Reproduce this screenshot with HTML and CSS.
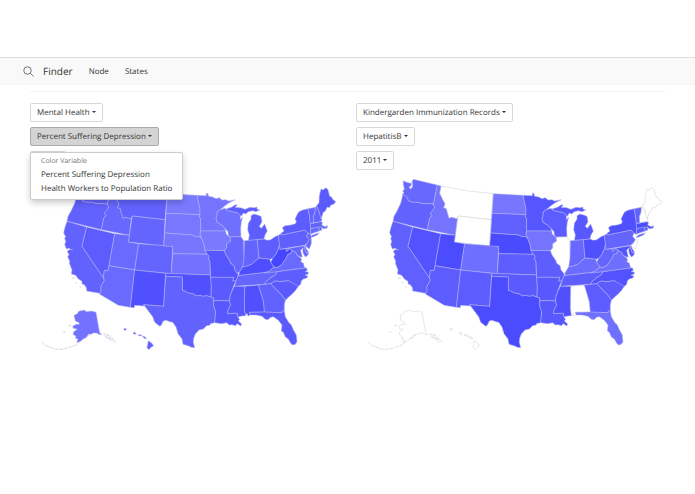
FILE: index.html
```html
<!DOCTYPE html>
<html lang="en">
<head>
    <meta charset="UTF-8">
    <meta name="viewport" content="width=device-width, initial-scale=1.0">
    <title>Finder</title>
    <link rel="stylesheet" href="styles.css">
</head>
<body>
    <nav class="navbar">
        <svg class="search-icon" viewBox="0 0 22 22" aria-hidden="true">
            <circle cx="9" cy="9" r="7.5"/>
            <path d="M14.5 14.5L21 21"/>
        </svg>
        <a href="#" class="brand">Finder</a>
        <a href="#">Node</a>
        <a href="#">States</a>
    </nav>

    <main class="container">
        <div class="panel">
            <button type="button" class="btn">Mental Health <span class="caret"></span></button>
            <div class="dropdown">
                <button type="button" class="btn active" aria-expanded="true">Percent Suffering Depression <span class="caret"></span></button>
                <ul class="dropdown-menu">
                    <li class="dropdown-header">Color Variable</li>
                    <li><a href="#">Percent Suffering Depression</a></li>
                    <li><a href="#">Health Workers to Population Ratio</a></li>
                </ul>
            </div>
            <button type="button" class="btn" aria-label="Year"><span class="caret"></span></button>
            <svg class="map" id="map-depression" viewBox="0 0 927 540"></svg>
        </div>

        <div class="panel">
            <button type="button" class="btn">Kindergarden Immunization Records <span class="caret"></span></button>
            <button type="button" class="btn">HepatitisB <span class="caret"></span></button>
            <button type="button" class="btn">2011 <span class="caret"></span></button>
            <svg class="map" id="map-immunization" viewBox="0 0 927 540"></svg>
        </div>
    </main>

    <script src="maps.js"></script>
</body>
</html>
```
FILE: styles.css
```css
* {
    box-sizing: border-box;
}

body {
    margin: 0;
    padding-top: 57px;
    font-family: "Open Sans", sans-serif;
    font-size: 8px;
    line-height: 11px;
    text-rendering: geometricPrecision;
    color: #333;
    background-color: #fff;
}

a {
    color: inherit;
    text-decoration: none;
}

/* Navigation */
.navbar {
    display: flex;
    align-items: center;
    gap: 16px;
    height: 28px;
    padding: 0 23px;
    background-color: #f9f9f9;
    border-top: 1px solid #ddd;
    border-bottom: 1px solid #f4f4f4;
}

.search-icon {
    width: 11px;
    height: 11px;
    margin-right: -7px;
    fill: none;
    stroke: #555;
    stroke-width: 1.6;
}

.brand {
    font-size: 10px;
}

/* Content */
.container {
    display: grid;
    grid-template-columns: 1fr 1fr;
    gap: 17px;
    margin: 6px 30px 0;
    padding-top: 11px;
    border-top: 1px solid #f3f3f3;
}

.panel {
    display: flex;
    flex-direction: column;
    align-items: flex-start;
    gap: 5px;
}

.btn {
    min-width: 36px;
    height: 19px;
    padding: 0 6px 1px;
    font: inherit;
    text-rendering: inherit;
    color: #333;
    background-color: #fff;
    border: 1px solid #d8d8d8;
    border-radius: 2px;
    white-space: nowrap;
    cursor: pointer;
}

.btn.active {
    background-color: #d4d4d4;
    border-color: #aaa;
}

.caret {
    display: inline-block;
    vertical-align: middle;
    border-top: 2px solid #333;
    border-left: 2px solid transparent;
    border-right: 2px solid transparent;
}

.dropdown {
    position: relative;
    display: flex;
}

.dropdown-menu {
    position: absolute;
    top: 100%;
    left: 0;
    margin: 6px 0 0;
    padding: 2px 0 3px;
    list-style: none;
    white-space: nowrap;
    background-color: #fff;
    border: 1px solid #ccc;
    border-radius: 2px;
    box-shadow: 0 3px 6px rgba(0, 0, 0, 0.2);
}

.dropdown-menu a {
    display: block;
    padding: 1px 10px 2px;
}

.dropdown-header {
    padding: 1px 10px;
    font-size: 7px;
    color: #777;
}

/* Maps */
.map {
    display: block;
    width: 100%;
}

.map path {
    stroke: #b4b4ee;
    stroke-width: 1.5;
    stroke-linejoin: round;
}

.map .no-data {
    fill: #fff;
    stroke: #ccc;
}

.map .islands {
    fill: none;
    stroke: #b4b4d0;
    stroke-width: 2;
    stroke-dasharray: 7 3 3 2;
}

.map .no-data.islands {
    stroke: #c4c4c4;
}
```
FILE: maps.js
```js
// Outline of every state
const states = {
    WA: 'M142,17L152,22 160,24 167,25 165,32 159,37 163,42 169,37 170,27 168,20 172,13 244,30 232,87 220,86 200,86 185,82 170,82 158,78 152,66 140,58 144,52 140,49 145,42 142,30Z',
    OR: 'M140,58L152,66 158,78 170,82 185,82 200,86 220,86 232,88 236,97 230,108 223,115 228,122 221,130 214,164 111,139 114,124 123,108 134,85 138,70Z',
    ID: 'M244,30L255,33 251,55 262,78 267,86 263,98 271,101 274,113 279,130 286,127 304,131 298,181 214,164 221,130 228,122 223,115 236,97 232,88Z',
    MT: 'M255,33L330,47 412,56 405,134 307,123 304,131 286,127 279,130 274,113 271,101 263,98 267,86 262,78 251,55Z',
    WY: 'M307,123L405,134 401,213 295,201Z',
    CA: 'M111,139L170,156 156,214 220,308 223,316 216,328 212,338 214,346 209,355 170,348 169,338 163,329 156,327 156,319 145,312 137,301 124,297 126,285 118,265 119,258 113,246 117,238 112,231 114,226 123,223 128,225 116,220 109,222 104,208 107,200 104,190 107,185 101,174 104,160Z',
    NV: 'M170,156L254,176 237,272 234,287 223,286 220,308 156,214Z',
    UT: 'M254,176L298,181 295,201 326,206 314,285 237,272Z',
    CO: 'M326,206L428,214 424,296 314,285Z',
    AZ: 'M237,272L314,285 301,397 265,391 208,357 214,346 212,338 216,328 223,316 220,308 223,286 234,287Z',
    NM: 'M314,285L407,295 401,394 341,389 343,393 314,391 313,398 301,397Z',
    ND: 'M412,56L502,61 505,80 510,100 510,119 408,115Z',
    SD: 'M408,115L510,119 508,125 512,131 512,168 510,178 515,190 508,185 498,185 487,180 404,174Z',
    NE: 'M404,174L487,180 498,185 508,185 515,190 522,208 525,226 532,238 428,236 428,214 401,213Z',
    KS: 'M428,236L532,238 538,244 535,250 540,260 541,300 424,296Z',
    OK: 'M407,295L541,300 542,307 544,334 543,366 530,362 520,364 508,361 500,363 488,356 475,354 466,349 457,346 457,306 407,304Z',
    TX: 'M407,304L457,306 457,346 466,349 475,354 488,356 500,363 508,361 520,364 530,362 543,366 551,368 551,393 557,410 554,443 541,446 541,450 530,452 520,462 507,465 496,477 491,490 490,502 494,518 484,517 474,512 459,508 456,492 444,476 438,456 428,442 420,440 408,436 400,438 393,452 388,453 374,442 368,425 355,408 341,389 401,394Z',
    MN: 'M502,61L529,62 529,54 534,56 536,64 548,66 558,71 568,68 576,75 588,74 596,78 616,74 600,82 585,92 571,104 562,110 561,124 558,130 561,142 575,150 585,160 587,168 512,168 512,131 508,125 510,119 510,100 505,80Z',
    IA: 'M512,168L587,168 589,178 600,186 602,198 590,206 590,218 583,227 525,226 522,208 515,190 510,178Z',
    MO: 'M525,226L583,227 588,240 599,256 602,265 612,272 615,285 625,297 622,308 618,318 608,318 611,307 542,307 540,260 535,250 538,244 532,238Z',
    AR: 'M542,307L611,307 608,318 618,318 612,330 605,350 600,365 598,377 551,377 551,368 543,366 544,334Z',
    LA: 'M551,377L598,377 602,390 594,405 593,416 622,414 624,426 629,434 625,438 635,447 632,453 622,446 616,452 606,449 598,450 590,443 575,446 554,443 557,410 551,393Z',
    WI: 'M571,104L584,100 594,107 622,113 631,120 631,134 638,127 634,142 632,160 633,185 600,186 595,180 594,170 585,160 575,150 561,142 558,130 561,124 562,110Z',
    MI: 'M588,102L606,96 616,89 622,91 615,97 632,98 645,103 660,97 672,98 681,96 681,102 689,105 678,110 668,107 655,110 647,117 640,114 634,124 622,113 594,107ZM655,197L658,180 653,164 655,145 663,132 663,122 672,117 683,120 693,124 696,140 688,154 694,160 704,147 712,168 705,180 702,192 682,194Z',
    IL: 'M600,186L633,185 641,197 642,250 640,270 636,280 628,292 620,294 615,285 612,272 602,265 599,256 588,240 583,227 590,218 590,206 602,198Z',
    IN: 'M643,197L682,194 687,249 676,258 665,268 652,273 638,276 642,250Z',
    OH: 'M682,194L702,192 712,196 722,194 735,185 745,181 749,207 745,222 738,238 728,250 720,253 705,251 687,249Z',
    KY: 'M626,302L628,292 638,276 652,273 665,268 676,258 687,249 705,251 720,253 722,262 732,276 716,290 700,293Z',
    TN: 'M624,302L700,293 716,291 742,290 736,300 722,308 708,320 704,328 613,334 618,318Z',
    WV: 'M749,207L750,223 768,221 770,229 780,220 786,226 782,236 774,238 768,250 760,262 752,272 740,278 732,276 722,262 728,250 738,238 745,222Z',
    VA: 'M704,294L716,290 732,276 740,278 752,272 760,262 768,250 774,238 782,236 786,226 798,233 800,240 812,248 815,256 812,260 820,264 824,279 742,290Z',
    PA: 'M745,181L753,176 754,180 825,165 834,174 830,184 838,194 832,204 824,211 750,223Z',
    NY: 'M754,180L753,175 762,168 757,158 765,152 782,150 796,146 799,139 795,132 805,112 815,106 834,101 838,120 842,150 842,175 840,178 834,174 825,165ZM840,187L848,180 868,173 862,180 846,187Z',
    VT: 'M834,101L856,97 855,112 850,125 851,143 841,146 838,120Z',
    NH: 'M856,97L860,92 868,112 876,135 873,140 851,143 850,125 855,112Z',
    ME: 'M860,92L867,83 868,62 873,42 879,45 888,38 894,44 899,64 905,66 908,73 917,80 911,88 903,90 898,98 892,96 886,108 880,112 876,124 873,132 868,112Z',
    MA: 'M841,146L873,140 878,143 875,149 882,154 890,156 888,150 893,154 891,160 880,161 874,156 842,161Z',
    CT: 'M842,161L866,156 868,168 850,174 842,178Z',
    RI: 'M866,156L874,156 876,165 868,168Z',
    NJ: 'M834,174L843,179 844,198 844,206 838,222 826,213 832,204 838,194 830,184Z',
    MD: 'M768,221L822,212 828,232 836,234 832,242 826,246 820,236 818,226 820,218 812,226 817,246 812,246 800,240 798,233 786,226 780,220 770,229Z',
    DE: 'M822,212L826,213 828,220 836,232 828,232Z',
    NC: 'M742,290L824,279 829,278 832,286 826,290 835,291 834,298 825,300 834,304 829,310 820,312 814,318 812,328 805,334 795,333 775,317 752,320 735,318 722,326 704,328 708,320 722,308 736,300Z',
    SC: 'M722,326L735,318 752,320 775,317 805,334 797,346 786,358 776,366 766,376 755,360 740,345Z',
    GA: 'M685,330L722,326 740,345 755,360 766,376 763,390 763,408 757,408 756,413 703,412 700,380Z',
    AL: 'M644,334L685,330 700,380 703,411 658,412 661,420 654,423 651,415 646,422 643,400Z',
    MS: 'M613,334L644,334 643,400 646,422 635,423 624,426 622,414 593,416 594,405 602,390 598,377 600,365 605,350Z',
    FL: 'M658,412L703,411 756,413 757,408 763,408 766,425 776,442 784,450 790,464 799,480 801,500 796,508 788,510 782,505 775,492 766,486 760,472 754,468 756,450 745,436 730,425 722,427 714,434 706,433 696,424 678,420 661,420Z',
    AK: 'M132,421L142,416 146,409 162,405 170,410 184,408 198,412 209,473 215,478 209,479 200,474 190,474 184,478 176,477 169,487 160,492 150,500 140,502 144,492 136,490 138,484 129,478 131,470 142,463 130,460 128,454 138,448 148,448 147,443 136,438Z',
    HI: 'M281,461L288,460 289,465 283,466ZM309,473L314,471 319,478 311,477ZM325,479L336,480 334,483 326,482ZM337,483L346,486 350,491 342,490ZM355,497L364,503 371,512 363,517 357,524 351,518 353,508Z'
};

// Thin island chains around Alaska and California
const islands = {
    AK: 'M150,499L138,510 118,517 100,522 78,523 60,516 48,512 36,500M167,491L173,483 180,480M100,470L106,472M116,451L123,452M220,478L232,477 244,487 258,500M224,482L236,490 248,502M230,479L246,494 254,502M228,486L242,494',
    CA: 'M127,310L134,309M137,323L141,325M149,334L152,338'
};

// Red/green level of the fill, lower is a stronger blue
const depression = {
    WA: 100, OR: 98, CA: 98, NV: 92, ID: 104, MT: 98, WY: 100, UT: 106, CO: 100, AZ: 106,
    NM: 80, ND: 122, SD: 120, NE: 118, KS: 114, OK: 80, TX: 98, MN: 116, IA: 122, MO: 86,
    AR: 90, LA: 88, WI: 112, MI: 94, IL: 104, IN: 100, OH: 94, KY: 78, TN: 102, WV: 70,
    PA: 96, NY: 92, VT: 98, NH: 100, ME: 90, MA: 98, CT: 104, RI: 98, NJ: 102, MD: 102,
    DE: 98, VA: 106, NC: 94, SC: 90, GA: 98, AL: 80, MS: 88, FL: 90, AK: 114, HI: 98
};

const immunization = {
    WA: 104, OR: 98, CA: 96, NV: 82, ID: 116, UT: 76, CO: 110, AZ: 92, NM: 92, ND: 118,
    SD: 96, NE: 74, KS: 94, OK: 90, TX: 76, MN: 86, IA: 116, MO: 94, AR: 88, LA: 88,
    WI: 92, MI: 88, IN: 104, OH: 80, KY: 108, TN: 94, WV: 100, PA: 100, NY: 80, VT: 98,
    MA: 76, CT: 92, RI: 88, MD: 84, DE: 88, VA: 110, NC: 82, SC: 92, GA: 92, MS: 80, FL: 112
};

function addPath(svg, d, className) {
    const path = document.createElementNS('http://www.w3.org/2000/svg', 'path');
    path.setAttribute('d', d);
    if (className) {
        path.setAttribute('class', className);
    }
    svg.appendChild(path);
    return path;
}

function drawMap(id, levels) {
    const svg = document.getElementById(id);

    // States without a value go first so their grey border stays underneath
    const names = Object.keys(states).sort((a, b) => (a in levels) - (b in levels));

    names.forEach(name => {
        const level = levels[name];
        const path = addPath(svg, states[name], level ? '' : 'no-data');
        if (level) {
            path.setAttribute('fill', `rgb(${level}, ${level}, 255)`);
        }
        if (islands[name]) {
            addPath(svg, islands[name], level ? 'islands' : 'islands no-data');
        }
    });
}

drawMap('map-depression', depression);
drawMap('map-immunization', immunization);
```
